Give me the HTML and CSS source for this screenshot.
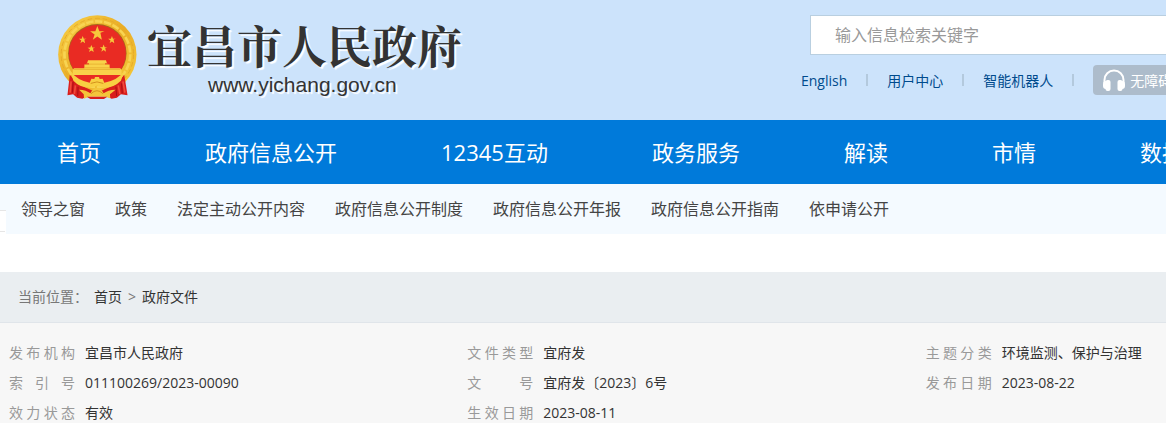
FILE: index.html
```html
<!DOCTYPE html>
<html lang="zh-CN">
<head>
    <meta charset="UTF-8">
    <meta name="viewport" content="width=device-width, initial-scale=1.0">
    <title>宜昌市人民政府</title>
    <link rel="stylesheet" href="styles.css">
</head>
<body>
    <div class="page">
        <header class="header">
            <a class="logo" href="#">
                <svg class="emblem" viewBox="50 44 240 256" aria-hidden="true">
                    <defs>
                        <linearGradient id="gold" x1="0" y1="0" x2="1" y2="1">
                            <stop offset="0" stop-color="#f9d34a"/>
                            <stop offset="0.5" stop-color="#e9ac25"/>
                            <stop offset="1" stop-color="#f8cf3f"/>
                        </linearGradient>
                        <path id="star" d="M0-10 2.6-3.2 9.5-3.1 4-1.2 5.9 8.1 0 3.8-5.9 8.1-3.6 1.2-9.5-3.1-2.6-3.2z"/>
                    </defs>
                    <!-- wreath and red disc -->
                    <circle cx="171" cy="163" r="118" fill="url(#gold)"/>
                    <circle cx="171" cy="163" r="109" fill="none" stroke="#e5ab2a" stroke-width="3" stroke-dasharray="14 9"/>
                    <circle cx="171" cy="162" r="99" fill="none" stroke="#f8d452" stroke-width="8" stroke-dasharray="22 5"/>
                    <circle cx="171" cy="159" r="88" fill="#a8661c"/>
                    <circle cx="171" cy="160" r="86" fill="#e92b23"/>
                    <!-- stars -->
                    <g fill="#f6c83c">
                        <use href="#star" transform="translate(171 100) scale(2.3)"/>
                        <use href="#star" transform="translate(127 119) scale(1.2)"/>
                        <use href="#star" transform="translate(215 119) scale(1.2)"/>
                        <use href="#star" transform="translate(153 146) scale(1.2)"/>
                        <use href="#star" transform="translate(190 145) scale(1.2)"/>
                    </g>
                    <!-- gate -->
                    <path d="M143 180h54l3 9h-6v4h14v11h32l4 5v16H97v-16l4-5h31v-11h14v-4h-6z" fill="#f9d24a"/>
                    <path d="M137 192h66M100 208h140M132 203h76" stroke="#e3a828" stroke-width="2"/>
                    <path d="M94 225h153l-14 18-34 10h-58l-34-10z" fill="#e92b23"/>
                    <!-- ribbons -->
                    <path d="M88 224l-7 62 17-3 12 10 16 3 44-22 44 22 16-3 12-10 20 3-10-62-24 28-58 26-58-26z" fill="#d91e1c"/>
                    <path d="M92 244l-3 34M105 256l-3 26M248 244l6 34M234 256l5 26" stroke="#f04b3a" stroke-width="5"/>
                    <path d="M98 246l-2 32M244 250l2 30M113 260l-1 28M227 260l2 28" stroke="#a90f14" stroke-width="3"/>
                    <!-- garland and cog -->
                    <path d="M90 214q20 26 58 34l5-12 9 1 2-6h12l2 6 9-1 5 12q40-8 60-34l-10 28q-22 22-52 21l-20-7-20 7q-32 0-51-21z" fill="#f8cf42"/>
                    <path d="M116 269q22 1 34 11 8-16 20-16t20 16q12-10 36-11l-17 14 1 12-16-5h-48l-15 6-1-13z" fill="#f4c53a"/>
                    <path d="M151 250q19-9 38 0M152 281q18-18 36 0" fill="none" stroke="#d4921d" stroke-width="3"/>
                    <path d="M139 290h62l-10 7h-41z" fill="#d91e1c"/>
                </svg>
                <span class="logo-text">
                    <span class="site-name">宜昌市人民政府</span>
                    <span class="site-url">www.yichang.gov.cn</span>
                </span>
            </a>

            <div class="tools">
                <form class="search">
                    <input type="text" placeholder="输入信息检索关键字" aria-label="输入信息检索关键字">
                </form>
                <div class="links">
                    <a href="#">English</a>
                    <i class="sep"></i>
                    <a href="#">用户中心</a>
                    <i class="sep"></i>
                    <a href="#">智能机器人</a>
                    <i class="sep"></i>
                    <button type="button" class="barrier-btn">
                        <svg viewBox="0 0 22 22" aria-hidden="true">
                            <path d="M1.5 14v-3a9.500 9.500 0 0 1 19 0v3" fill="none" stroke="#fff" stroke-width="2"/>
                            <rect x="2.500" y="11" width="5" height="11" rx="2" fill="#fff"/>
                            <rect x="14.500" y="11" width="5" height="11" rx="2" fill="#fff"/>
                            <path d="M3 12a3 3 0 0 0-3 3v2a3 3 0 0 0 3 3zM19 12a3 3 0 0 1 3 3v2a3 3 0 0 1-3 3z" fill="#fff"/>
                        </svg>
                        <span>无障碍</span>
                    </button>
                </div>
            </div>
        </header>

        <nav class="nav">
            <a href="#">首页</a>
            <a href="#">政府信息公开</a>
            <a href="#">12345互动</a>
            <a href="#">政务服务</a>
            <a href="#">解读</a>
            <a href="#">市情</a>
            <a href="#">数据</a>
        </nav>

        <nav class="subnav">
            <a href="#">领导之窗</a>
            <a href="#">政策</a>
            <a href="#">法定主动公开内容</a>
            <a href="#">政府信息公开制度</a>
            <a href="#">政府信息公开年报</a>
            <a href="#">政府信息公开指南</a>
            <a href="#">依申请公开</a>
        </nav>

        <div class="crumbs">
            <span class="crumbs-label">当前位置：</span>
            <a href="#">首页</a>
            <span>&gt;</span>
            <a href="#">政府文件</a>
        </div>

        <dl class="info">
            <div class="info-item"><dt>发布机构</dt><dd>宜昌市人民政府</dd></div>
            <div class="info-item"><dt>文件类型</dt><dd>宜府发</dd></div>
            <div class="info-item"><dt>主题分类</dt><dd>环境监测、保护与治理</dd></div>
            <div class="info-item"><dt>索 引 号</dt><dd>011100269/2023-00090</dd></div>
            <div class="info-item"><dt>文 号</dt><dd>宜府发〔2023〕6号</dd></div>
            <div class="info-item"><dt>发布日期</dt><dd>2023-08-22</dd></div>
            <div class="info-item"><dt>效力状态</dt><dd>有效</dd></div>
            <div class="info-item"><dt>生效日期</dt><dd>2023-08-11</dd></div>
        </dl>
    </div>
</body>
</html>
```
FILE: styles.css
```css
* {
    margin: 0;
    padding: 0;
    box-sizing: border-box;
}

body {
    background: #fff;
    color: #333;
    font-family: "Open Sans", "Noto Sans CJK SC", sans-serif;
    font-size: 14px;
    overflow: hidden;
}

a {
    color: inherit;
    text-decoration: none;
}

.page {
    min-width: 1384px;
}

/* header */
.header {
    display: flex;
    justify-content: space-between;
    height: 120px;
    padding: 15px 0 0 57px;
    background: #cce3fb;
}

.logo {
    display: flex;
    align-items: flex-start;
    gap: 10px;
}

.emblem {
    width: 80px;
    height: 85px;
}

.logo-text {
    display: flex;
    flex-direction: column;
    color: #333;
    text-shadow: 2px 2px 1px #fff;
}

.site-name {
    font-family: "Noto Serif CJK SC", "Noto Sans CJK SC", serif;
    font-size: 45px;
    font-weight: 700;
    line-height: 60px;
}

.site-url {
    padding-left: 61px;
    font-family: "Liberation Sans", Arial, sans-serif;
    font-size: 21px;
    line-height: 20px;
}

.tools {
    width: 583px;
}

.search {
    padding-left: 9px;
}

.search input {
    display: block;
    width: 100%;
    height: 40px;
    padding: 0 24px;
    border: 1px solid #b9cfe0;
    background: #fff;
    font-family: inherit;
    font-size: 16px;
}

.search input::placeholder {
    color: #999;
}

.links {
    display: flex;
    align-items: center;
    gap: 19px;
    margin-top: 10px;
    color: #004b8d;
    white-space: nowrap;
}

.sep {
    width: 2px;
    height: 12px;
    background: #b3c9dd;
}

.barrier-btn {
    display: flex;
    align-items: center;
    gap: 5px;
    height: 30px;
    padding: 0 10px;
    border: none;
    border-radius: 4px;
    background: #adbccb;
    color: #fff;
    font-family: inherit;
    font-size: 14px;
}

.barrier-btn svg {
    width: 22px;
    height: 22px;
}

/* main nav */
.nav {
    display: flex;
    gap: 104px;
    padding-left: 57px;
    background: #007ada;
    color: #fff;
    font-size: 22px;
    line-height: 64px;
    white-space: nowrap;
}

.subnav {
    position: relative;
    display: flex;
    gap: 30px;
    padding-left: 21px;
    background: #f4faff;
    color: #444;
    font-size: 16px;
    line-height: 50px;
    white-space: nowrap;
}

.subnav::before {
    content: "";
    position: absolute;
    left: 0;
    top: 26px;
    width: 6px;
    height: 24px;
    border-top: 1px solid #e6e6e6;
    background: linear-gradient(#e6e6e6, #e6e6e6) 0 20px / 5px 1px no-repeat #fff;
}

/* breadcrumb */
.crumbs {
    display: flex;
    gap: 6px;
    margin-top: 38px;
    padding-left: 18px;
    border-bottom: 1px solid #e0e5ea;
    background: #eaeef1;
    line-height: 50px;
}

.crumbs span {
    color: #777;
}

/* document info */
.info {
    display: grid;
    grid-template-columns: repeat(3, 1fr);
    padding: 15px 0 15px 9px;
    background: #f7f7f7;
    line-height: 30px;
}

.info-item {
    display: flex;
    gap: 10px;
}

.info dt {
    width: 66px;
    color: #999;
    text-align: justify;
    text-align-last: justify;
    text-justify: inter-character;
}
```
